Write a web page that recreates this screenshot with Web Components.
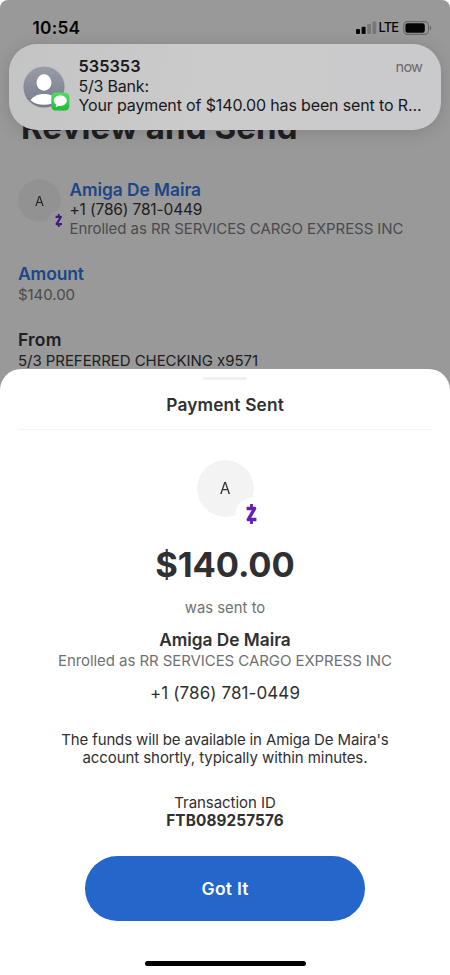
<!DOCTYPE html>
<html lang="en">
<head>
<meta charset="utf-8">
<title>Payment Sent</title>
<style>
html,body{margin:0;padding:0;background:#fff}
body{font-family:Inter,"Liberation Sans",sans-serif;color:#303032;width:450px;height:975px;overflow:hidden}
</style>
</head>
<body>
<payment-screen></payment-screen>
<script>
const define = (name, html, ready) => customElements.define(name, class extends HTMLElement {
  connectedCallback() {
    if (this.shadowRoot) return;
    const t = document.createElement('template');
    t.innerHTML = html;
    this.attachShadow({ mode: 'open' }).append(t.content.cloneNode(true));
    if (ready) ready(this, this.shadowRoot);
  }
});

/* One line of text. size: font size, line: line height, width: set width reached by tracking. */
define('text-line', `<style>
:host{display:block;white-space:nowrap}
span{display:inline-block;vertical-align:top}
</style><span><slot></slot></span>`, (el, root) => {
  const span = root.querySelector('span');
  el.style.fontSize = el.getAttribute('size') + 'px';
  el.style.lineHeight = el.getAttribute('line') + 'px';
  el.style.height = el.getAttribute('line') + 'px';
  if (el.hasAttribute('weight')) el.style.fontWeight = el.getAttribute('weight');
  const width = +el.getAttribute('width');
  if (width) {
    const gap = (width - span.getBoundingClientRect().width) / (el.textContent.length - 1);
    span.style.letterSpacing = gap + 'px';
    span.style.marginRight = -gap + 'px';
  }
});

define('zelle-mark', `<style>:host{display:block}svg{display:block;width:100%;height:100%}</style>
<svg viewBox="0 0 11 20" fill="none" stroke="currentColor"><path d="M5.500 0v4M5.500 16v4" stroke-width="2.800"/><path d="M.6 4.500H8.700L2.200 15.500h8.200" stroke-width="3.300" stroke-linejoin="round"/></svg>`);

define('contact-avatar', `<style>
:host{display:block;position:relative;width:var(--d);height:var(--d);flex:none}
.disc{width:100%;height:100%;border-radius:50%;background:var(--disc);display:grid;place-items:center;
-webkit-mask:radial-gradient(circle at var(--cx) var(--cy),transparent var(--cr),#000 calc(var(--cr) + .8px));mask:radial-gradient(circle at var(--cx) var(--cy),transparent var(--cr),#000 calc(var(--cr) + .8px))}
zelle-mark{position:absolute;left:var(--zx);top:var(--zy);width:var(--zw);height:var(--zh);color:var(--z)}
</style><div class="disc"><slot></slot></div><zelle-mark></zelle-mark>`);

define('status-bar', `<style>
:host{display:flex;height:44px;padding:11px 18px 0 32.500px;box-sizing:border-box;align-items:center;justify-content:space-between;color:#050505}
.r{display:flex;align-items:center;height:33px}svg{display:block}
text-line{margin-right:4px}
</style>
<text-line size="17.300" line="33" weight="600" width="47.500">10:54</text-line>
<div class="r"><svg width="21" height="13" viewBox="0 0 21 13"><rect x="0" y="8" width="4" height="5" rx="1" fill="#050505"/><rect x="5.600" y="5.800" width="4" height="7.200" rx="1" fill="#050505"/><rect x="11.200" y="3" width="3.800" height="10" rx="1" fill="#777"/><rect x="16.500" y=".5" width="3.800" height="12.500" rx="1" fill="#777"/></svg>
<text-line size="12.800" line="33" weight="500" width="20.500" style="margin-left:2px">LTE</text-line>
<svg width="29" height="14" viewBox="0 0 29 14"><rect x=".8" y=".6" width="24.700" height="12.800" rx="3.800" fill="none" stroke="#686868" stroke-width="1.100"/><rect x="2.400" y="2.200" width="19.400" height="9.600" rx="2.300" fill="#050505"/><path d="M26.800 4.700c2 .7 2 3.900 0 4.600z" fill="#686868"/></svg></div>`);

define('message-banner', `<style>
:host{display:flex;box-sizing:border-box;width:432.500px;height:86px;border-radius:28px;padding:12.500px 18px 0 14.500px;background:linear-gradient(100deg,#c4c4c5,#cbcbcb 45%,#cacacd);box-shadow:0 2px 17px rgba(0,0,0,.15);color:#18181a}
.pic{position:relative;width:42px;height:42px;margin-top:9.500px;flex:none}
.pic>svg{display:block}
.app{position:absolute;left:28px;top:26px}
.body{margin-left:13.500px;flex:1}
.top{display:flex;justify-content:space-between;height:21px}
</style>
<div class="pic"><svg width="42" height="42" viewBox="0 0 42 42"><defs><linearGradient id="g" x2="0" y2="1"><stop stop-color="#999ca8"/><stop offset="1" stop-color="#777a89"/></linearGradient><clipPath id="c"><circle cx="21" cy="21" r="20.600"/></clipPath></defs><circle cx="21" cy="21" r="20.600" fill="url(#g)"/><g clip-path="url(#c)" fill="#fff"><ellipse cx="21" cy="16.500" rx="7.500" ry="8.200"/><path d="M7.500 34.300C11 29.500 16 28 21 28s10 1.500 13.500 6.300C31 37.500 26.500 38.800 21 38.800S11 37.500 7.500 34.300z"/></g></svg>
<svg class="app" width="19" height="19" viewBox="0 0 19 19"><defs><linearGradient id="m" x2="0" y2="1"><stop stop-color="#54db63"/><stop offset="1" stop-color="#1fbb35"/></linearGradient></defs><rect x=".3" y=".5" width="18" height="18" rx="4.200" fill="url(#m)"/><path d="M9.300 3.500c-3.700 0-6.500 2.200-6.500 5.100 0 1.800 1.100 3.300 2.700 4.200 0 .9-.5 1.600-1.100 2.200 1.300 0 2.300-.6 3.100-1.300l1.800.2c3.700 0 6.500-2.300 6.500-5.300s-2.800-5.100-6.500-5.100z" fill="#fff"/></svg></div>
<div class="body">
<div class="top"><text-line size="16.300" line="20.500" weight="600" width="62">535353</text-line><text-line size="14.500" line="22" width="27.500" style="color:#68686a">now</text-line></div>
<text-line size="16" line="19" width="70.500">5/3 Bank:</text-line>
<text-line size="16" line="19" width="343">Your payment of $140.00 has been sent to R...</text-line>
</div>`);

define('review-page', `<style>
:host{display:block;height:400px;box-sizing:border-box;padding:63px 18px 0;background:#999;color:#202022}
.blue{color:#1b4687}.soft{color:#4b4b4d}
.who{display:flex;height:55px;margin:32px 0 0}
.who>div{margin-left:8.500px}
contact-avatar{--d:43px;--disc:#929292;--cx:40px;--cy:41px;--cr:9px;--zx:37px;--zy:35px;--zw:7.500px;--zh:13px;--z:#451581}
</style>
<text-line size="33" line="40" weight="700" width="276.500" style="margin-left:3px">Review and Send</text-line>
<div class="who"><contact-avatar><text-line size="13" line="45">A</text-line></contact-avatar>
<div><text-line class="blue" size="17.300" line="21" weight="600" width="131.500">Amiga De Maira</text-line>
<text-line size="15.500" line="20" width="133">+1 (786) 781-0449</text-line>
<text-line class="soft" size="15" line="17.500" width="334">Enrolled as RR SERVICES CARGO EXPRESS INC</text-line></div></div>
<text-line class="blue" size="17.500" line="22" weight="600" width="66" style="margin-top:28.500px">Amount</text-line>
<text-line class="soft" size="15" line="19" width="57">$140.00</text-line>
<text-line size="17.500" line="22" weight="600" width="43.500" style="margin-top:25px">From</text-line>
<text-line size="15" line="19" width="240">5/3 PREFERRED CHECKING x9571</text-line>`);

define('pill-button', `<style>
:host{display:block}
button{display:flex;align-items:center;justify-content:center;width:280px;height:65px;border:0;border-radius:33px;background:#2466ca;color:#fff;font:inherit;padding:0}
</style><button><slot></slot></button>`);

define('payment-sheet', `<style>
:host{display:flex;flex-direction:column;align-items:center;box-sizing:border-box;width:450px;height:606.500px;background:#fff;border-radius:21px 21px 0 0;color:#303032}
.handle{width:44px;height:3px;margin-top:8.500px;background:#f0f0f1;border-radius:2px}
header{width:415px;height:48.500px;border-bottom:1px solid #f4f4f5;display:flex;justify-content:center;align-items:center}
.soft{color:#717173}
contact-avatar{margin-top:30.500px;--d:57px;--disc:#f3f3f3;--cx:54px;--cy:53.500px;--cr:15px;--zx:49px;--zy:44px;--zw:11px;--zh:20px;--z:#641db5}
.home{width:161px;height:5.500px;border-radius:3px;background:#000;margin-top:40px}
</style>
<div class="handle"></div>
<header><text-line size="17.300" line="24" weight="600" width="117.500" style="padding-top:1.500px">Payment Sent</text-line></header>
<contact-avatar><text-line size="15.500" line="58">A</text-line></contact-avatar>
<text-line size="34.500" line="44" weight="700" width="139.500" style="margin-top:25.500px">$140.00</text-line>
<text-line class="soft" size="14.800" line="20" width="80.500" style="margin-top:11.500px">was sent to</text-line>
<text-line size="17.300" line="22" weight="600" width="131.500" style="margin-top:11px">Amiga De Maira</text-line>
<text-line class="soft" size="15" line="19" width="334">Enrolled as RR SERVICES CARGO EXPRESS INC</text-line>
<text-line size="17" line="22" width="150" style="margin-top:12px">+1 (786) 781-0449</text-line>
<text-line size="15" line="18" width="327.500" style="margin-top:27px">The funds will be available in Amiga De Maira's</text-line>
<text-line size="15" line="18" width="285">account shortly, typically within minutes.</text-line>
<text-line size="15" line="18" width="101.500" style="margin-top:26.500px">Transaction ID</text-line>
<text-line size="15.300" line="18" weight="700" width="117.500">FTB089257576</text-line>
<pill-button style="margin-top:26px"><text-line size="17.500" line="25" weight="600" width="47">Got It</text-line></pill-button>
<div class="home"></div>`);

define('payment-screen', `<style>
:host{display:block;position:relative;width:450px;height:975px;overflow:hidden;background:#fff}
.back{border-radius:8px 8px 0 0;overflow:hidden;height:400px;background:#999}
message-banner{position:absolute;left:8.500px;top:43.500px}
payment-sheet{position:absolute;left:0;top:368.500px}
</style>
<div class="back"><status-bar></status-bar><review-page></review-page></div>
<message-banner></message-banner>
<payment-sheet></payment-sheet>`);
</script>
</body>
</html>
